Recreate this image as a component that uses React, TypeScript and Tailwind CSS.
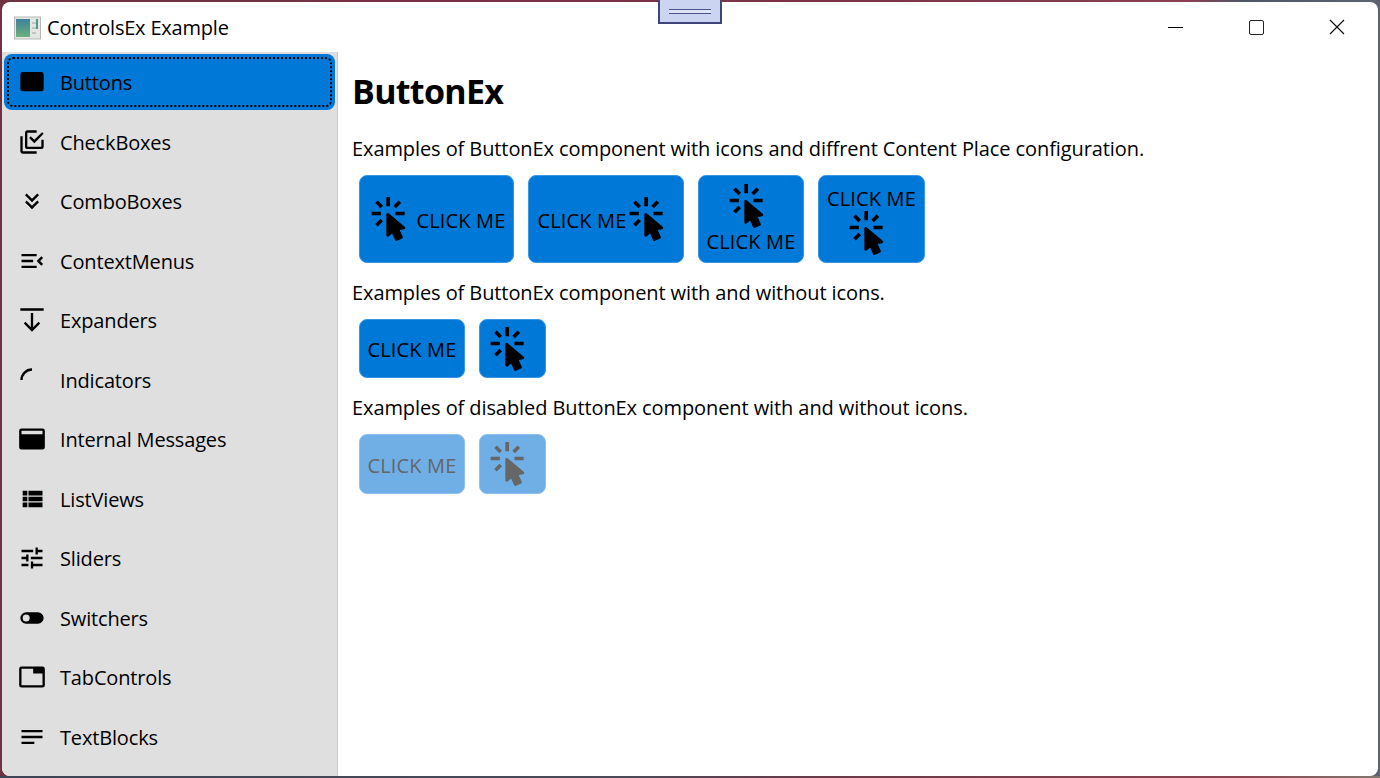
import type { ReactNode } from "react";

const font = { fontFamily: '"Open Sans", "Noto Sans", sans-serif' };

function Mdi({ d, size = 28, className = "" }: { d: string; size?: number; className?: string }) {
    return (
        <svg viewBox="0 0 24 24" width={size} height={size} className={className} fill="currentColor">
            <path d={d} />
        </svg>
    );
}

const clickPath =
    "M10.76,8.69A0.76,0.76 0 0,0 10,9.45V20.9C10,21.32 10.34,21.66 10.76,21.66C10.95,21.66 11.11,21.6 11.24,21.5L13.15,19.95L14.81,23.57C14.94,23.84 15.21,24 15.5,24C15.61,24 15.72,24 15.83,23.92L18.59,22.64C18.97,22.46 19.15,22 18.95,21.63L17.28,18L19.69,17.55C19.85,17.5 20,17.43 20.12,17.29C20.39,16.97 20.35,16.5 20,16.21L11.26,8.86L11.25,8.87C11.12,8.76 10.95,8.69 10.76,8.69M15,10V8H20V10H15M13.83,4.76L16.66,1.93L18.07,3.34L15.24,6.17L13.83,4.76M10,0H12V5H10V0M3.93,14.66L6.76,11.83L8.17,13.24L5.34,16.07L3.93,14.66M3.93,3.34L5.34,1.93L8.17,4.76L6.76,6.17L3.93,3.34M7,10H2V8H7V10";

const navItems: { label: string; d: string }[] = [
    { label: "Buttons", d: "M4 3.5h16a2 2 0 0 1 2 2v12.5a2 2 0 0 1-2 2H4a2 2 0 0 1-2-2V5.5a2 2 0 0 1 2-2z" },
    {
        label: "CheckBoxes",
        d: "M20,16V10H22V16A2,2 0 0,1 20,18H8C6.89,18 6,17.1 6,16V4C6,2.89 6.89,2 8,2H16V4H8V16H20M10.91,7.08L14,10.17L20.59,3.58L22,5L14,13L9.5,8.5L10.91,7.08M16,20V22H4A2,2 0 0,1 2,20V7H4V20H16Z",
    },
    {
        label: "ComboBoxes",
        d: "M16.59 5.59 18 7l-6 6-6-6 1.41-1.41L12 10.17l4.59-4.58m0 6L18 13l-6 6-6-6 1.41-1.41L12 16.17l4.59-4.58z",
    },
    { label: "ContextMenus", d: "M3 6h13v2H3V6m0 10h13v2H3v-2m0-5h10v2H3v-2m13 1 4 4 1.5-1.4L19 12l2.5-2.6L20 8l-4 4z" },
    { label: "Expanders", d: "M22 4H2V2h20v2M12 22l-7-7 1.4-1.4 4.6 4.6V6h2v12.2l4.6-4.6L19 15l-7 7z" },
    { label: "Indicators", d: "M12 4V2A10 10 0 0 0 2 12h2a8 8 0 0 1 8-8z" },
    {
        label: "Internal Messages",
        d: "M3 3h18a2 2 0 0 1 2 2v14a2 2 0 0 1-2 2H3a2 2 0 0 1-2-2V5a2 2 0 0 1 2-2m0 2v3h18V5H3z",
    },
    { label: "ListViews", d: "M9 5v4h12V5M9 19h12v-4H9m0-1h12v-4H9M4 9h4V5H4m0 14h4v-4H4m0-1h4v-4H4v4z" },
    {
        label: "Sliders",
        d: "M3 17v2h6v-2H3M3 5v2h10V5H3m10 16v-2h8v-2h-8v-2h-2v6h2M7 9v2H3v2h4v2h2V9H7m14 4v-2H11v2h10m-6-4h2V7h4V5h-4V3h-2v6z",
    },
    {
        label: "Switchers",
        d: "M17 7H7a5 5 0 0 0 0 10h10a5 5 0 0 0 0-10M7 15a3 3 0 1 1 0-6 3 3 0 0 1 0 6z",
    },
    {
        label: "TabControls",
        d: "M3 3h18a2 2 0 0 1 2 2v14a2 2 0 0 1-2 2H3a2 2 0 0 1-2-2V5a2 2 0 0 1 2-2m0 2v14h18V9h-8V5H3z",
    },
    { label: "TextBlocks", d: "M3 18h11v-2H3v2M3 6v2h18V6H3m0 7h18v-2H3v2z" },
];

function ExButton({
    width,
    height,
    vertical = false,
    disabled = false,
    children,
}: {
    width: string;
    height: string;
    vertical?: boolean;
    disabled?: boolean;
    children: ReactNode;
}) {
    return (
        <div
            className={`${width} ${height} flex items-center justify-center rounded-lg border ${vertical ? "flex-col" : ""} ${
                disabled
                    ? "border-[#8cc0ee] bg-[#70aee6] text-[#666666]"
                    : "border-[#3a95e2] bg-[#0078d7] text-black"
            }`}
        >
            {children}
        </div>
    );
}

const Click = ({ className = "" }: { className?: string }) => <Mdi d={clickPath} size={44} className={className} />;
const Label = ({ className = "translate-y-[2px]" }: { className?: string }) => (
    <span className={`${className} whitespace-nowrap text-[20px] leading-[26px] tracking-[0.15px]`}>CLICK ME</span>
);

function Para({ children }: { children: ReactNode }) {
    return <p className="text-[20px] leading-[28px] tracking-[-0.09px] text-black">{children}</p>;
}

export default function App() {
    return (
        <div
            style={font}
            className="relative h-[778px] w-[1380px] overflow-hidden bg-[linear-gradient(to_right,#6f3242_0%,#7c3348_60%,#8a4052_86%,#4f5666_90%,#5c6270_100%)] p-[2px]"
        >
            <div className="flex h-[774px] w-[1376px] flex-col overflow-hidden rounded-lg bg-white">
                <header className="flex h-[50px] shrink-0 items-center">
                    <svg width="28" height="24" viewBox="0 0 28 24" className="ml-[12px] mt-[2px]">
                        <defs>
                            <linearGradient id="pane" x1="0" y1="0" x2="0" y2="1">
                                <stop offset="0" stopColor="#3f7f9c" />
                                <stop offset="1" stopColor="#6cb07c" />
                            </linearGradient>
                        </defs>
                        <rect x="0.5" y="1" width="26" height="22" fill="#e4e6e4" stroke="#b5b9b5" />
                        <rect x="2" y="3" width="14" height="18" fill="url(#pane)" />
                        <rect x="18" y="6" width="4" height="2" fill="#c2c6c2" />
                        <rect x="18" y="11" width="4" height="2" fill="#c2c6c2" />
                        <rect x="18" y="16" width="4" height="2" fill="#c2c6c2" />
                        <rect x="22" y="3" width="2" height="10" fill="#4f9a90" />
                    </svg>
                    <span className="ml-[5px] mt-[2px] text-[20px] tracking-[-0.2px] text-black">ControlsEx Example</span>
                    <div className="ml-auto flex items-center pr-[1px]">
                        <div className="flex h-[50px] w-[82px] items-center justify-center">
                            <div className="h-px w-[15px] bg-black" />
                        </div>
                        <div className="flex h-[50px] w-[80px] items-center justify-center">
                            <div className="h-[15px] w-[15px] rounded-[2px] border-[1.5px] border-[#222222]" />
                        </div>
                        <div className="flex h-[50px] w-[81px] items-center justify-center">
                            <svg width="16" height="16" viewBox="0 0 16 16" stroke="#111111" strokeWidth="1.2">
                                <path d="M1 1l14 14M15 1L1 15" />
                            </svg>
                        </div>
                    </div>
                </header>

                <div className="flex min-h-0 flex-1">
                    <nav className="w-[336px] shrink-0 border-r border-[#c8c8c8] bg-[#dfdfdf] pl-[2px] pr-[2px] pt-[2px]">
                        {navItems.map((item, i) => (
                            <div
                                key={item.label}
                                className={`relative flex h-[56px] items-center rounded-lg pl-[14px] text-[20px] tracking-[-0.16px] text-black ${
                                    i === 0 ? "bg-[#0078d7]" : ""
                                } ${i === navItems.length - 1 ? "" : "mb-[3.5px]"}`}
                            >
                                {i === 0 && (
                                    <div className="absolute inset-[3px] rounded-md border-2 border-dotted border-black" />
                                )}
                                <Mdi d={item.d} />
                                <span className="ml-[14px] pt-[2px]">{item.label}</span>
                            </div>
                        ))}
                    </nav>

                    <main className="min-w-0 flex-1 pl-[14px] pt-[16px]">
                        <h1 className="text-[34px] font-bold leading-[46px] tracking-[-0.7px] text-black">ButtonEx</h1>
                        <div className="mt-[21px]">
                            <Para>Examples of ButtonEx component with icons and diffrent Content Place configuration.</Para>
                        </div>
                        <div className="ml-[7px] mt-[12px] flex gap-[14px]">
                            <ExButton width="w-[155px]" height="h-[88px]">
                                <Click className="mr-[5px]" />
                                <Label />
                            </ExButton>
                            <ExButton width="w-[156px]" height="h-[88px]">
                                <Label />
                                <Click className="mr-[4px]" />
                            </ExButton>
                            <ExButton width="w-[106px]" height="h-[88px]" vertical>
                                <Click className="mr-[7px]" />
                                <Label className="translate-y-[1px]" />
                            </ExButton>
                            <ExButton width="w-[107px]" height="h-[88px]" vertical>
                                <Label />
                                <Click className="mr-[7px] translate-y-[1px]" />
                            </ExButton>
                        </div>
                        <div className="mt-[16px]">
                            <Para>Examples of ButtonEx component with and without icons.</Para>
                        </div>
                        <div className="ml-[7px] mt-[12px] flex gap-[14px]">
                            <ExButton width="w-[106px]" height="h-[59px]">
                                <Label className="translate-y-[1px]" />
                            </ExButton>
                            <ExButton width="w-[67px]" height="h-[59px]">
                                <Click className="mr-[7px]" />
                            </ExButton>
                        </div>
                        <div className="mt-[16px]">
                            <Para>Examples of disabled ButtonEx component with and without icons.</Para>
                        </div>
                        <div className="ml-[7px] mt-[12px] flex gap-[14px]">
                            <ExButton width="w-[106px]" height="h-[60px]" disabled>
                                <Label />
                            </ExButton>
                            <ExButton width="w-[67px]" height="h-[60px]" disabled>
                                <Click className="mr-[7px]" />
                            </ExButton>
                        </div>
                    </main>
                </div>
            </div>

            {/* desktop showing through under the window */}
            <div className="absolute bottom-0 left-0 h-[2px] w-full bg-[linear-gradient(to_right,#3d4656_0%,#4a4a58_45%,#6a3a48_60%,#8a4450_90%,#80786e_100%)]" />

            {/* snap grip peeking in over the top edge */}
            <div className="absolute left-[658px] top-0 flex h-[24px] w-[64px] items-center justify-center border-2 border-t-0 border-[#3d4676] bg-[#cbd5f1]">
                <div className="h-[5px] w-[42px] border-y border-[#4a5488] bg-[#dfe5f6]" />
            </div>
        </div>
    );
}
